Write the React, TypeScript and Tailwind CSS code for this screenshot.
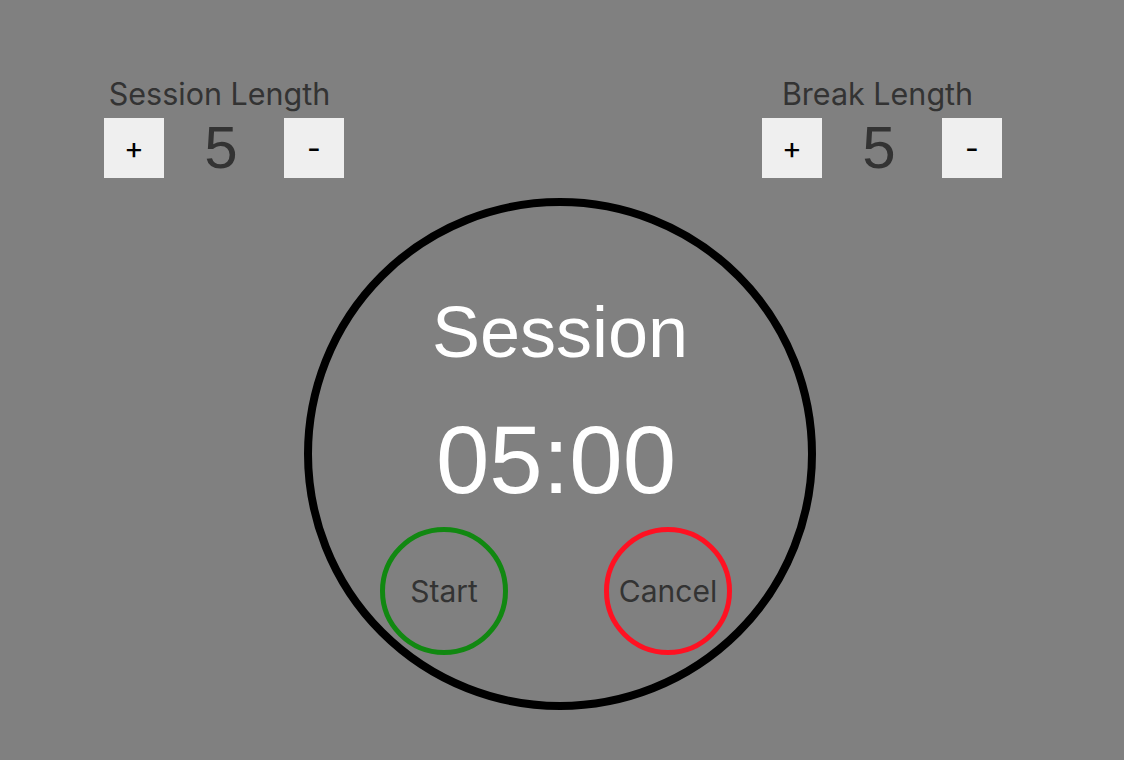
import { useState } from "react";

type LengthProps = {
  label: string;
  value: number;
  onInc: () => void;
  onDec: () => void;
};

const LengthControl = ({ label, value, onInc, onDec }: LengthProps) => {
  return (
    <div className="flex flex-col items-center">
      <h2 className="font-['Inter',sans-serif] text-[30.5px] leading-[36px] text-[#333333] -ml-[9px]">
        {label}
      </h2>
      <div className="flex items-center mt-[6px]">
        <button
          onClick={onInc}
          className="w-[60px] h-[60px] bg-[#efefef] text-black text-[30px] font-['Inter',sans-serif] flex items-center justify-center"
        >
          +
        </button>
        <span className="w-[120px] text-center pr-[6px] font-['Liberation_Sans',sans-serif] text-[60px] leading-[60px] text-[#333333]">
          {value}
        </span>
        <button
          onClick={onDec}
          className="w-[60px] h-[60px] bg-[#efefef] text-black text-[30px] font-['Inter',sans-serif] flex items-center justify-center"
        >
          -
        </button>
      </div>
    </div>
  );
};

const App = () => {
  const [session, setSession] = useState(5);
  const [brk, setBrk] = useState(5);

  const mm = String(session).padStart(2, "0");

  return (
    <div className="w-full h-[760px] bg-[#808080] overflow-hidden">
      <div className="flex justify-between pl-[104px] pr-[122px] pt-[76px]">
        <LengthControl
          label="Session Length"
          value={session}
          onInc={() => setSession((s) => s + 1)}
          onDec={() => setSession((s) => Math.max(1, s - 1))}
        />
        <LengthControl
          label="Break Length"
          value={brk}
          onInc={() => setBrk((s) => s + 1)}
          onDec={() => setBrk((s) => Math.max(1, s - 1))}
        />
      </div>

      <div className="flex justify-center pr-[4px] mt-[20px]">
        <div className="w-[512px] h-[512px] rounded-full border-[8px] border-black flex flex-col items-center">
          <div className="mt-[86px] font-['Liberation_Sans',sans-serif] text-[72px] leading-[80px] text-white">
            Session
          </div>
          <div className="mt-[38px] pr-[8px] font-['Liberation_Sans',sans-serif] text-[96px] leading-[100px] text-white">
            {mm}:00
          </div>
          <div className="w-full flex justify-between pl-[68px] pr-[76px] mt-[17px]">
            <button className="w-[128px] h-[128px] rounded-full border-[5px] border-[#118811] font-['Inter',sans-serif] text-[30px] text-[#333333]">
              Start
            </button>
            <button className="w-[128px] h-[128px] rounded-full border-[5px] border-[#ff1122] font-['Inter',sans-serif] text-[30px] text-[#333333]">
              Cancel
            </button>
          </div>
        </div>
      </div>
    </div>
  );
};

export default App;
